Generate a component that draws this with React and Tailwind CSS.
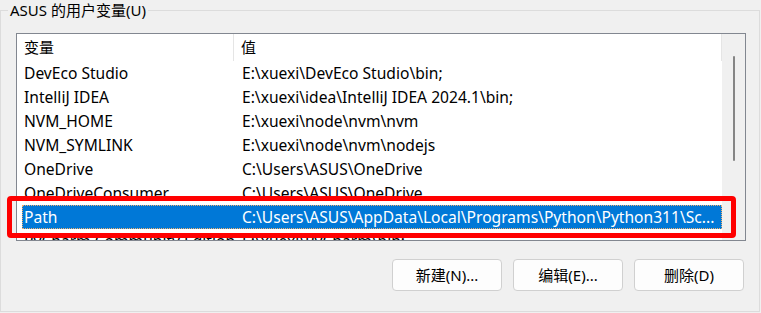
import React from 'react';

const rows = [
  ['DevEco Studio', 'E:\\xuexi\\DevEco Studio\\bin;'],
  ['IntelliJ IDEA', 'E:\\xuexi\\idea\\IntelliJ IDEA 2024.1\\bin;'],
  ['NVM_HOME', 'E:\\xuexi\\node\\nvm\\nvm'],
  ['NVM_SYMLINK', 'E:\\xuexi\\node\\nvm\\nodejs'],
  ['OneDrive', 'C:\\Users\\ASUS\\OneDrive'],
  ['OneDriveConsumer', 'C:\\Users\\ASUS\\OneDrive'],
  ['Path', 'C:\\Users\\ASUS\\AppData\\Local\\Programs\\Python\\Python311\\Sc...'],
  ['PyCharm Community Edition', 'E:\\xuexi\\PyCharm\\bin;'],
];

const font = { fontFamily: '"Segoe UI", "Noto Sans", "Noto Sans CJK SC", sans-serif' };

const Button = ({ children }) => (
  <button className="w-[110px] h-[32px] rounded-[4px] border border-[#d0d0d0] bg-[#fdfdfd] text-[15px] text-black">
    {children}
  </button>
);

export default function App() {
  return (
    <div className="w-[761px] h-[313px] bg-[#f0f0f0] pt-[10px] overflow-hidden" style={font}>
      <div className="relative w-[760px] h-[302px] border border-[#dcdcdc]">
        <div className="absolute -top-[11px] left-[7px] px-[2px] bg-[#f0f0f0] text-[15px] leading-[20px] text-black">
          ASUS 的用户变量(U)
        </div>

        <div className="ml-[15px] mt-[22px] w-[730px] h-[208px] border border-[#828790] bg-white flex overflow-hidden">
          <div className="w-[705px] flex flex-col">
            <div className="h-[27px] flex items-center text-[15px] text-black shrink-0">
              <div className="w-[217px] pl-[7px] h-full flex items-center border-r border-[#e5e5e5]">变量</div>
              <div className="flex-1 pl-[7px] h-full flex items-center border-r border-[#e5e5e5]">值</div>
            </div>
            <div className="pl-[5px]">
              {rows.map(([name, value]) => {
                const sel = name === 'Path';
                return (
                  <div
                    key={name}
                    className={
                      sel
                        ? 'h-[24px] pt-[2px] flex items-center text-[15.6px] text-white bg-[#0078d7] border border-dotted border-[#f0b070]'
                        : 'h-[24px] pt-[2px] flex items-center text-[15.6px] text-black border border-transparent'
                    }
                  >
                    <div className="w-[218px] pl-[1px] whitespace-nowrap overflow-hidden">{name}</div>
                    <div className="flex-1 pl-[1px] whitespace-nowrap overflow-hidden">{value}</div>
                  </div>
                );
              })}
            </div>
          </div>
          <div className="flex-1 bg-[#f0f0f0] flex justify-center pt-[22px]">
            <div className="w-[2px] h-[105px] bg-[#858585] rounded-full" />
          </div>
        </div>

        <div className="absolute left-[6px] top-[185px] w-[729px] h-[42px] border-[5px] border-[#ff0000] rounded-[4px]" />

        <div className="flex justify-end gap-[11px] mt-[18px] pr-[15px]">
          <Button>新建(N)...</Button>
          <Button>编辑(E)...</Button>
          <Button>删除(D)</Button>
        </div>
      </div>
    </div>
  );
}
